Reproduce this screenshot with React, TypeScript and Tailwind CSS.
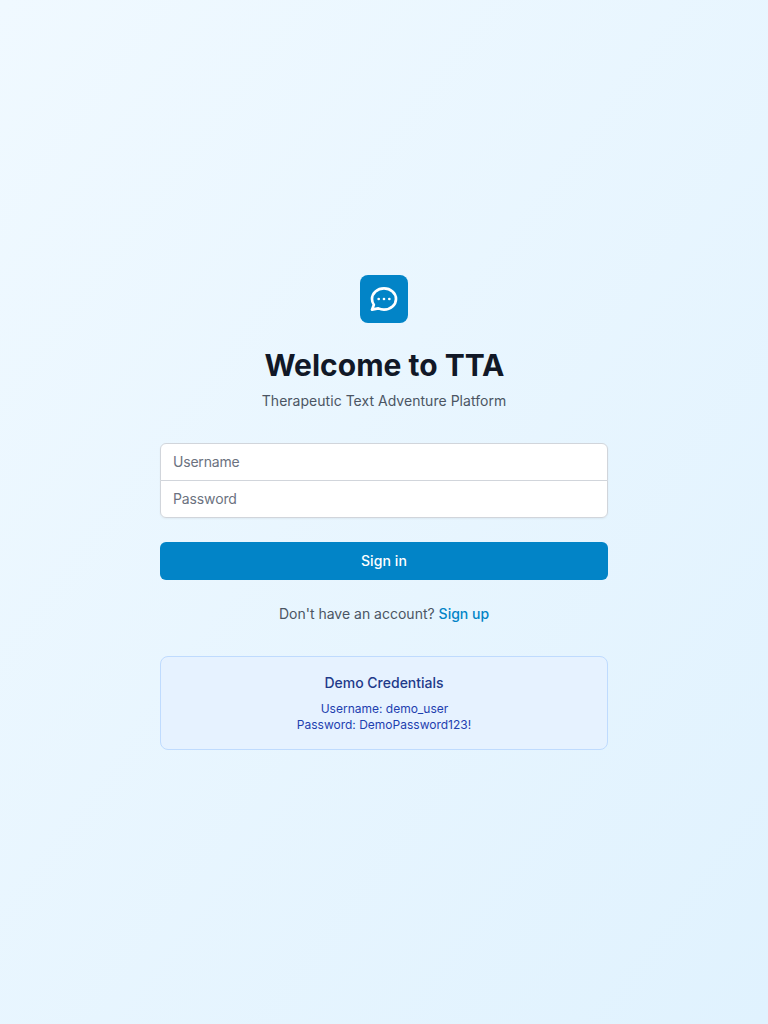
export default function App() {
  return (
    <div className="min-h-screen flex items-center justify-center bg-linear-to-br/srgb from-[#f0f9ff] to-[#e0f2fe] font-['Inter',sans-serif] px-8">
      <main className="w-full max-w-md space-y-8">
        <header className="text-center">
          <div className="mx-auto h-12 w-12 rounded-lg bg-[#0284c7] flex items-center justify-center">
            <svg className="h-8 w-8 text-white" fill="none" viewBox="0 0 24 24" stroke="currentColor">
              <path strokeLinecap="round" strokeLinejoin="round" strokeWidth={2} d="M8 12h.01M12 12h.01M16 12h.01M21 12c0 4.418-4.03 8-9 8a9.863 9.863 0 01-4.255-.949L3 20l1.395-3.72C3.512 15.042 3 13.574 3 12c0-4.418 4.03-8 9-8s9 3.582 9 8z" />
            </svg>
          </div>
          <h1 className="mt-6 pl-px text-3xl font-bold text-[#111827]">Welcome to TTA</h1>
          <p className="mt-2 text-sm tracking-[0.03px] text-[#4b5563]">Therapeutic Text Adventure Platform</p>
        </header>
        <form className="space-y-6" onSubmit={(e) => e.preventDefault()}>
          <div className="rounded-md shadow-xs -space-y-px">
            <input type="text" placeholder="Username" aria-label="Username" className="block w-full rounded-t-md border border-[#d1d5db] bg-white px-3 py-2 text-sm tracking-[-0.2px] text-[#111827] placeholder-[#6b7280]" />
            <input type="password" placeholder="Password" aria-label="Password" className="block w-full rounded-b-md border border-[#d1d5db] bg-white px-3 py-2 text-sm tracking-[-0.13px] text-[#111827] placeholder-[#6b7280]" />
          </div>
          <button type="submit" className="flex w-full justify-center rounded-md border border-transparent bg-[#0284c7] px-4 py-2 text-sm tracking-[0.1px] font-medium text-white">Sign in</button>
          <p className="text-center text-sm text-[#4b5563]">
            Don't have an account?{' '}
            <button type="button" className="font-medium text-[#0284c7]">Sign up</button>
          </p>
        </form>
        <section className="rounded-lg border border-[#bfdbfe] bg-[#e6f2ff] p-4 text-center">
          <h2 className="mb-2 text-sm font-medium text-[#1e3a8a]">Demo Credentials</h2>
          <p className="pl-px text-xs text-[#1e40af]">Username: demo_user</p>
          <p className="text-xs text-[#1e40af]">Password: DemoPassword123!</p>
        </section>
      </main>
    </div>
  )
}
